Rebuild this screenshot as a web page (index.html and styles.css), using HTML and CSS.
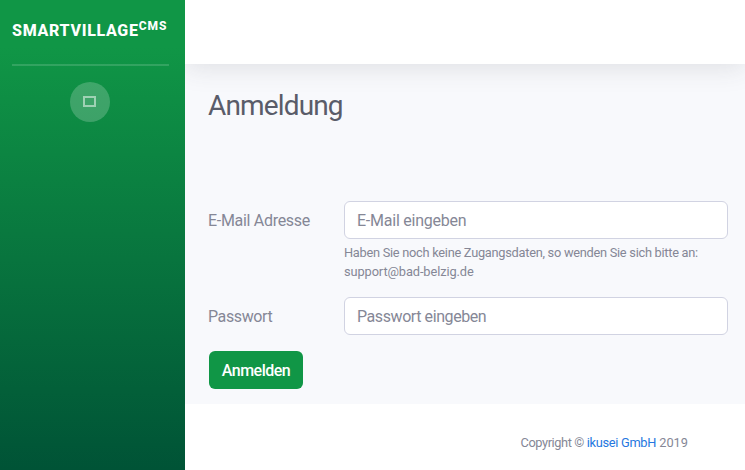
FILE: index.html
```html
<!DOCTYPE html>
<html lang="de">
<head>
<meta charset="utf-8">
<title>SmartVillage CMS</title>
<link rel="stylesheet" href="styles.css">
</head>
<body>
<div class="wrapper">
  <nav class="sidebar">
    <a class="brand"><span class="brand-name">SMARTVILLAGE</span><sup class="brand-sup">CMS</sup></a>
    <hr class="divider">
    <button class="toggle" aria-label="Menü"><svg width="13" height="11" viewBox="0 0 13 11"><rect x="1" y="1" width="11" height="9" fill="none" stroke="currentColor" stroke-width="2"/></svg></button>
  </nav>
  <div class="content">
    <header class="topbar"></header>
    <main class="main">
      <h1 class="title">Anmeldung</h1>
      <form class="form">
        <div class="row">
          <label class="label label-mail" for="mail">E-Mail Adresse</label>
          <div class="field">
            <input class="input input-mail" id="mail" type="email" placeholder="E-Mail eingeben">
            <small class="help"><span class="help-line">Haben Sie noch keine Zugangsdaten, so wenden Sie sich bitte an:</span><br><span class="help-mail">support@bad-belzig.de</span></small>
          </div>
        </div>
        <div class="row">
          <label class="label label-pass" for="pass">Passwort</label>
          <div class="field"><input class="input input-pass" id="pass" type="password" placeholder="Passwort eingeben"></div>
        </div>
        <button class="submit" type="button">Anmelden</button>
      </form>
    </main>
    <footer class="footer"><span class="copyright">Copyright © </span><a class="link">ikusei GmbH</a> 2019</footer>
  </div>
</div>
</body>
</html>
```
FILE: styles.css
```css
* { box-sizing: border-box; }
body {
  margin: 0;
  font-family: Roboto, "Noto Sans", sans-serif;
  font-size: 16px;
  line-height: 24px;
  color: #858796;
  overflow: hidden;
}
.wrapper { display: flex; height: 470px; }
.sidebar {
  width: 185px;
  flex: none;
  display: flex;
  flex-direction: column;
  align-items: center;
  background: linear-gradient(180deg, #109646 10%, #005336 100%);
}
.brand {
  align-self: stretch;
  height: 64px;
  padding: 19px 0 0 12px;
  color: #fff;
  font-weight: 800;
  white-space: nowrap;
}
.brand-name { font-size: 16px; letter-spacing: 0.7px; }
.brand-sup { font-size: 12px; line-height: 0; letter-spacing: 1px; vertical-align: 6px; }
.divider {
  width: 157px;
  height: 2px;
  margin: 0 4px 16px 0;
  border: 0;
  background: rgba(255, 255, 255, 0.15);
}
.toggle {
  width: 40px;
  height: 40px;
  margin-right: 5px;
  padding: 0 2px 1px 0;
  display: flex;
  align-items: center;
  justify-content: center;
  border: 0;
  border-radius: 50%;
  background: rgba(255, 255, 255, 0.2);
  color: rgba(255, 255, 255, 0.5);
}
.content { flex: 1; min-width: 0; display: flex; flex-direction: column; background: #f8f9fc; overflow: hidden; }
.topbar { height: 64px; flex: none; background: #fff; box-shadow: 0 2px 28px rgba(58, 59, 69, 0.15); }
.main { height: 340px; padding: 25px 17px 0 23px; }
.title { margin: 0 0 78px; font-size: 28px; line-height: 34px; font-weight: 400; letter-spacing: -0.85px; color: #5a5c69; }
.row { display: flex; margin-bottom: 16px; }
.label { width: 136px; flex: none; padding-top: 8px; white-space: nowrap; }
.label-mail { letter-spacing: -0.3px; }
.label-pass { letter-spacing: -0.4px; }
.field { flex: 1; min-width: 0; }
.input {
  display: block;
  width: 100%;
  height: 38px;
  padding: 0 12px;
  border: 1px solid #d1d3e2;
  border-radius: 6px;
  background: #fff;
  font: inherit;
}
.input-mail { letter-spacing: -0.23px; }
.input-pass { letter-spacing: -0.42px; }
.input::placeholder { color: #858796; opacity: 1; }
.help { display: block; margin-top: 4px; font-size: 12.8px; line-height: 19px; white-space: nowrap; }
.help-line { letter-spacing: -0.27px; }
.help-mail { letter-spacing: -0.1px; }
.submit {
  display: block;
  width: 94px;
  height: 38px;
  margin-left: 1px;
  padding: 2px 0 0;
  border: 0;
  border-radius: 6px;
  background: #109646;
  color: #fff;
  font: inherit;
  font-weight: 500;
  letter-spacing: -0.5px;
}
.footer { height: 66px; padding: 29px 57px 0 0; background: #fff; font-size: 12.8px; line-height: 19px; text-align: right; }
.copyright { letter-spacing: -0.4px; }
.link { color: #2678e0; letter-spacing: -0.3px; }
```
